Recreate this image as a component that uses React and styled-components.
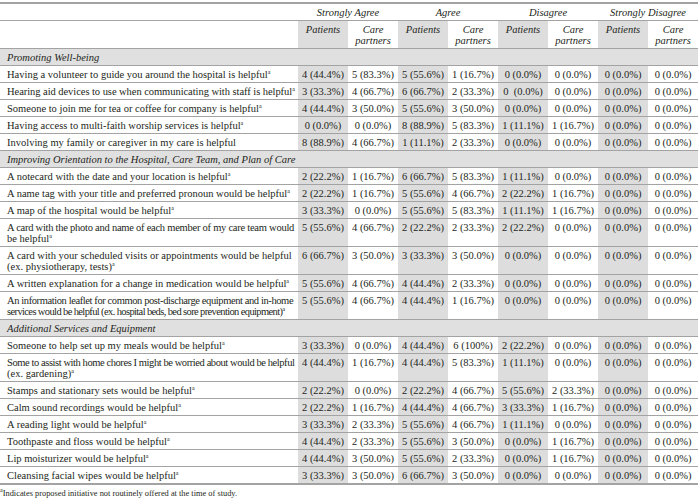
import * as React from 'react';
import styled, { createGlobalStyle } from 'styled-components';

const GlobalStyle = createGlobalStyle`
  html, body {
    margin: 0;
    padding: 0;
    background: #ffffff;
  }
  body {
    font-family: "Liberation Serif", "Times New Roman", serif;
    color: #231f20;
  }
`;

const groups = ['Strongly Agree', 'Agree', 'Disagree', 'Strongly Disagree'];

const z = '0 (0.0%)';

// lines: label text split as printed; tracking: letter-spacing per line (tight lines in the source)
const sections = [
  {
    title: 'Promoting Well-being',
    rows: [
      { lines: ['Having a volunteer to guide you around the hospital is helpful'], note: true,
        values: ['4 (44.4%)', '5 (83.3%)', '5 (55.6%)', '1 (16.7%)', z, z, z, z] },
      { lines: ['Hearing aid devices to use when communicating with staff is helpful'], note: true,
        tracking: [-0.05],
        values: ['3 (33.3%)', '4 (66.7%)', '6 (66.7%)', '2 (33.3%)', '0\u00a0 (0.0%)', z, z, z] },
      { lines: ['Someone to join me for tea or coffee for company is helpful'], note: true,
        values: ['4 (44.4%)', '3 (50.0%)', '5 (55.6%)', '3 (50.0%)', z, z, z, z] },
      { lines: ['Having access to multi-faith worship services is helpful'], note: true,
        values: [z, z, '8 (88.9%)', '5 (83.3%)', '1 (11.1%)', '1 (16.7%)', z, z] },
      { lines: ['Involving my family or caregiver in my care is helpful'], note: false,
        values: ['8 (88.9%)', '4 (66.7%)', '1 (11.1%)', '2 (33.3%)', z, z, z, z] },
    ],
  },
  {
    title: 'Improving Orientation to the Hospital, Care Team, and Plan of Care',
    rows: [
      { lines: ['A notecard with the date and your location is helpful'], note: true,
        values: ['2 (22.2%)', '1 (16.7%)', '6 (66.7%)', '5 (83.3%)', '1 (11.1%)', z, z, z] },
      { lines: ['A name tag with your title and preferred pronoun would be helpful'], note: true,
        values: ['2 (22.2%)', '1 (16.7%)', '5 (55.6%)', '4 (66.7%)', '2 (22.2%)', '1 (16.7%)', z, z] },
      { lines: ['A map of the hospital would be helpful'], note: true,
        values: ['3 (33.3%)', z, '5 (55.6%)', '5 (83.3%)', '1 (11.1%)', '1 (16.7%)', z, z] },
      { lines: ['A card with the photo and name of each member of my care team would', 'be helpful'],
        tracking: [-0.25, 0], note: true,
        values: ['5 (55.6%)', '4 (66.7%)', '2 (22.2%)', '2 (33.3%)', '2 (22.2%)', z, z, z] },
      { lines: ['A card with your scheduled visits or appointments would be helpful', '(ex. physiotherapy, tests)'],
        note: true,
        values: ['6 (66.7%)', '3 (50.0%)', '3 (33.3%)', '3 (50.0%)', z, z, z, z] },
      { lines: ['A written explanation for a change in medication would be helpful'], note: true,
        values: ['5 (55.6%)', '4 (66.7%)', '4 (44.4%)', '2 (33.3%)', z, z, z, z] },
      { lines: ['An information leaflet for common post-discharge equipment and in-home',
        'services would be helpful (ex. hospital beds, bed sore prevention equipment)'],
        tracking: [-0.4, -0.62], note: true,
        values: ['5 (55.6%)', '4 (66.7%)', '4 (44.4%)', '1 (16.7%)', z, z, z, z] },
    ],
  },
  {
    title: 'Additional Services and Equipment',
    rows: [
      { lines: ['Someone to help set up my meals would be helpful'], note: true,
        values: ['3 (33.3%)', z, '4 (44.4%)', '6 (100%)', '2 (22.2%)', z, z, z] },
      { lines: ['Some to assist with home chores I might be worried about would be helpful', '(ex. gardening)'],
        tracking: [-0.42, 0], note: true,
        values: ['4 (44.4%)', '1 (16.7%)', '4 (44.4%)', '5 (83.3%)', '1 (11.1%)', z, z, z] },
      { lines: ['Stamps and stationary sets would be helpful'], note: true,
        values: ['2 (22.2%)', z, '2 (22.2%)', '4 (66.7%)', '5 (55.6%)', '2 (33.3%)', z, z] },
      { lines: ['Calm sound recordings would be helpful'], note: true,
        values: ['2 (22.2%)', '1 (16.7%)', '4 (44.4%)', '4 (66.7%)', '3 (33.3%)', '1 (16.7%)', z, z] },
      { lines: ['A reading light would be helpful'], note: true,
        values: ['3 (33.3%)', '2 (33.3%)', '5 (55.6%)', '4 (66.7%)', '1 (11.1%)', z, z, z] },
      { lines: ['Toothpaste and floss would be helpful'], note: true,
        values: ['4 (44.4%)', '2 (33.3%)', '5 (55.6%)', '3 (50.0%)', z, '1 (16.7%)', z, z] },
      { lines: ['Lip moisturizer would be helpful'], note: true,
        values: ['4 (44.4%)', '3 (50.0%)', '5 (55.6%)', '2 (33.3%)', z, '1 (16.7%)', z, z] },
      { lines: ['Cleansing facial wipes would be helpful'], note: true,
        values: ['3 (33.3%)', '3 (50.0%)', '6 (66.7%)', '3 (50.0%)', z, z, z, z] },
    ],
  },
];

const App = () => (
  <Page>
    <GlobalStyle/>
    <Table>
      <colgroup>
        <col style={ { width: 298 } }/>
        {Array.from({ length: 8 }).map((_, i) => <col key={ i } style={ { width: 50 } }/>)}
      </colgroup>
      <thead>
        <GroupRow>
          <GroupCell/>
          {groups.map(g => <GroupCell key={ g } colSpan={ 2 }>{g}</GroupCell>)}
        </GroupRow>
        <tr>
          <SubCell/>
          {groups.map(g => (
            <React.Fragment key={ g }>
              <SubCell $shaded>Patients</SubCell>
              <SubCell>Care<br/>partners</SubCell>
            </React.Fragment>
          ))}
        </tr>
      </thead>
      <tbody>
        {sections.map(section => (
          <React.Fragment key={ section.title }>
            <SectionRow>
              <SectionCell colSpan={ 9 }>{section.title}</SectionCell>
            </SectionRow>
            {section.rows.map(row => (
              <DataRow key={ row.lines[0] }>
                <LabelCell>
                  {row.lines.map((line, i) => (
                    <Line key={ i } $tracking={ row.tracking ? row.tracking[i] : 0 }>
                      {line}
                      {row.note && i === row.lines.length - 1 && <Note>a</Note>}
                    </Line>
                  ))}
                </LabelCell>
                {row.values.map((v, i) => (
                  <ValueCell key={ i } $shaded={ i % 2 === 0 }>{v}</ValueCell>
                ))}
              </DataRow>
            ))}
          </React.Fragment>
        ))}
      </tbody>
    </Table>
    <Footnote><Note>a</Note>Indicates proposed initiative not routinely offered at the time of study.</Footnote>
  </Page>
);

const Page = styled.div`
  width: 700px;
  padding-top: 2px;
`;

const Table = styled.table`
  width: 698px;
  table-layout: fixed;
  border-collapse: collapse;
  font-size: 10.5px;
  line-height: 11px;
  border-top: 2px solid #a3a3a3;
  border-bottom: 2px solid #a3a3a3;
`;

const GroupRow = styled.tr`
  border-bottom: 1px solid #a3a3a3;
`;

const GroupCell = styled.th`
  font-weight: normal;
  font-style: italic;
  text-align: center;
  padding: 3px 0 2px;
  height: 11px;
`;

const SubCell = styled.th`
  font-weight: normal;
  font-style: italic;
  text-align: center;
  vertical-align: top;
  padding: 3px 0 2px;
  background: ${ p => (p.$shaded ? '#dddddd' : 'transparent') };
`;

const SectionRow = styled.tr`
  border-top: 1px solid #a3a3a3;
  border-bottom: 1px solid #a3a3a3;
`;

const SectionCell = styled.td`
  background: #e0e0e0;
  font-style: italic;
  padding: 3px 0 2px 7px;
`;

const DataRow = styled.tr`
  border-bottom: 1px solid #a3a3a3;
`;

const LabelCell = styled.td`
  padding: 3px 0 2px 7px;
  vertical-align: top;
`;

const Line = styled.span`
  display: block;
  white-space: nowrap;
  letter-spacing: ${ p => p.$tracking }px;
`;

const ValueCell = styled.td`
  padding: 3px 0 2px;
  text-align: center;
  vertical-align: top;
  white-space: nowrap;
  background: ${ p => (p.$shaded ? '#dddddd' : 'transparent') };
`;

const Note = styled.sup`
  font-size: 6px;
  line-height: 0;
  letter-spacing: 0;
  vertical-align: 4px;
`;

const Footnote = styled.div`
  font-size: 8.4px;
  line-height: 10px;
  margin-top: 4px;
`;

export default App;
